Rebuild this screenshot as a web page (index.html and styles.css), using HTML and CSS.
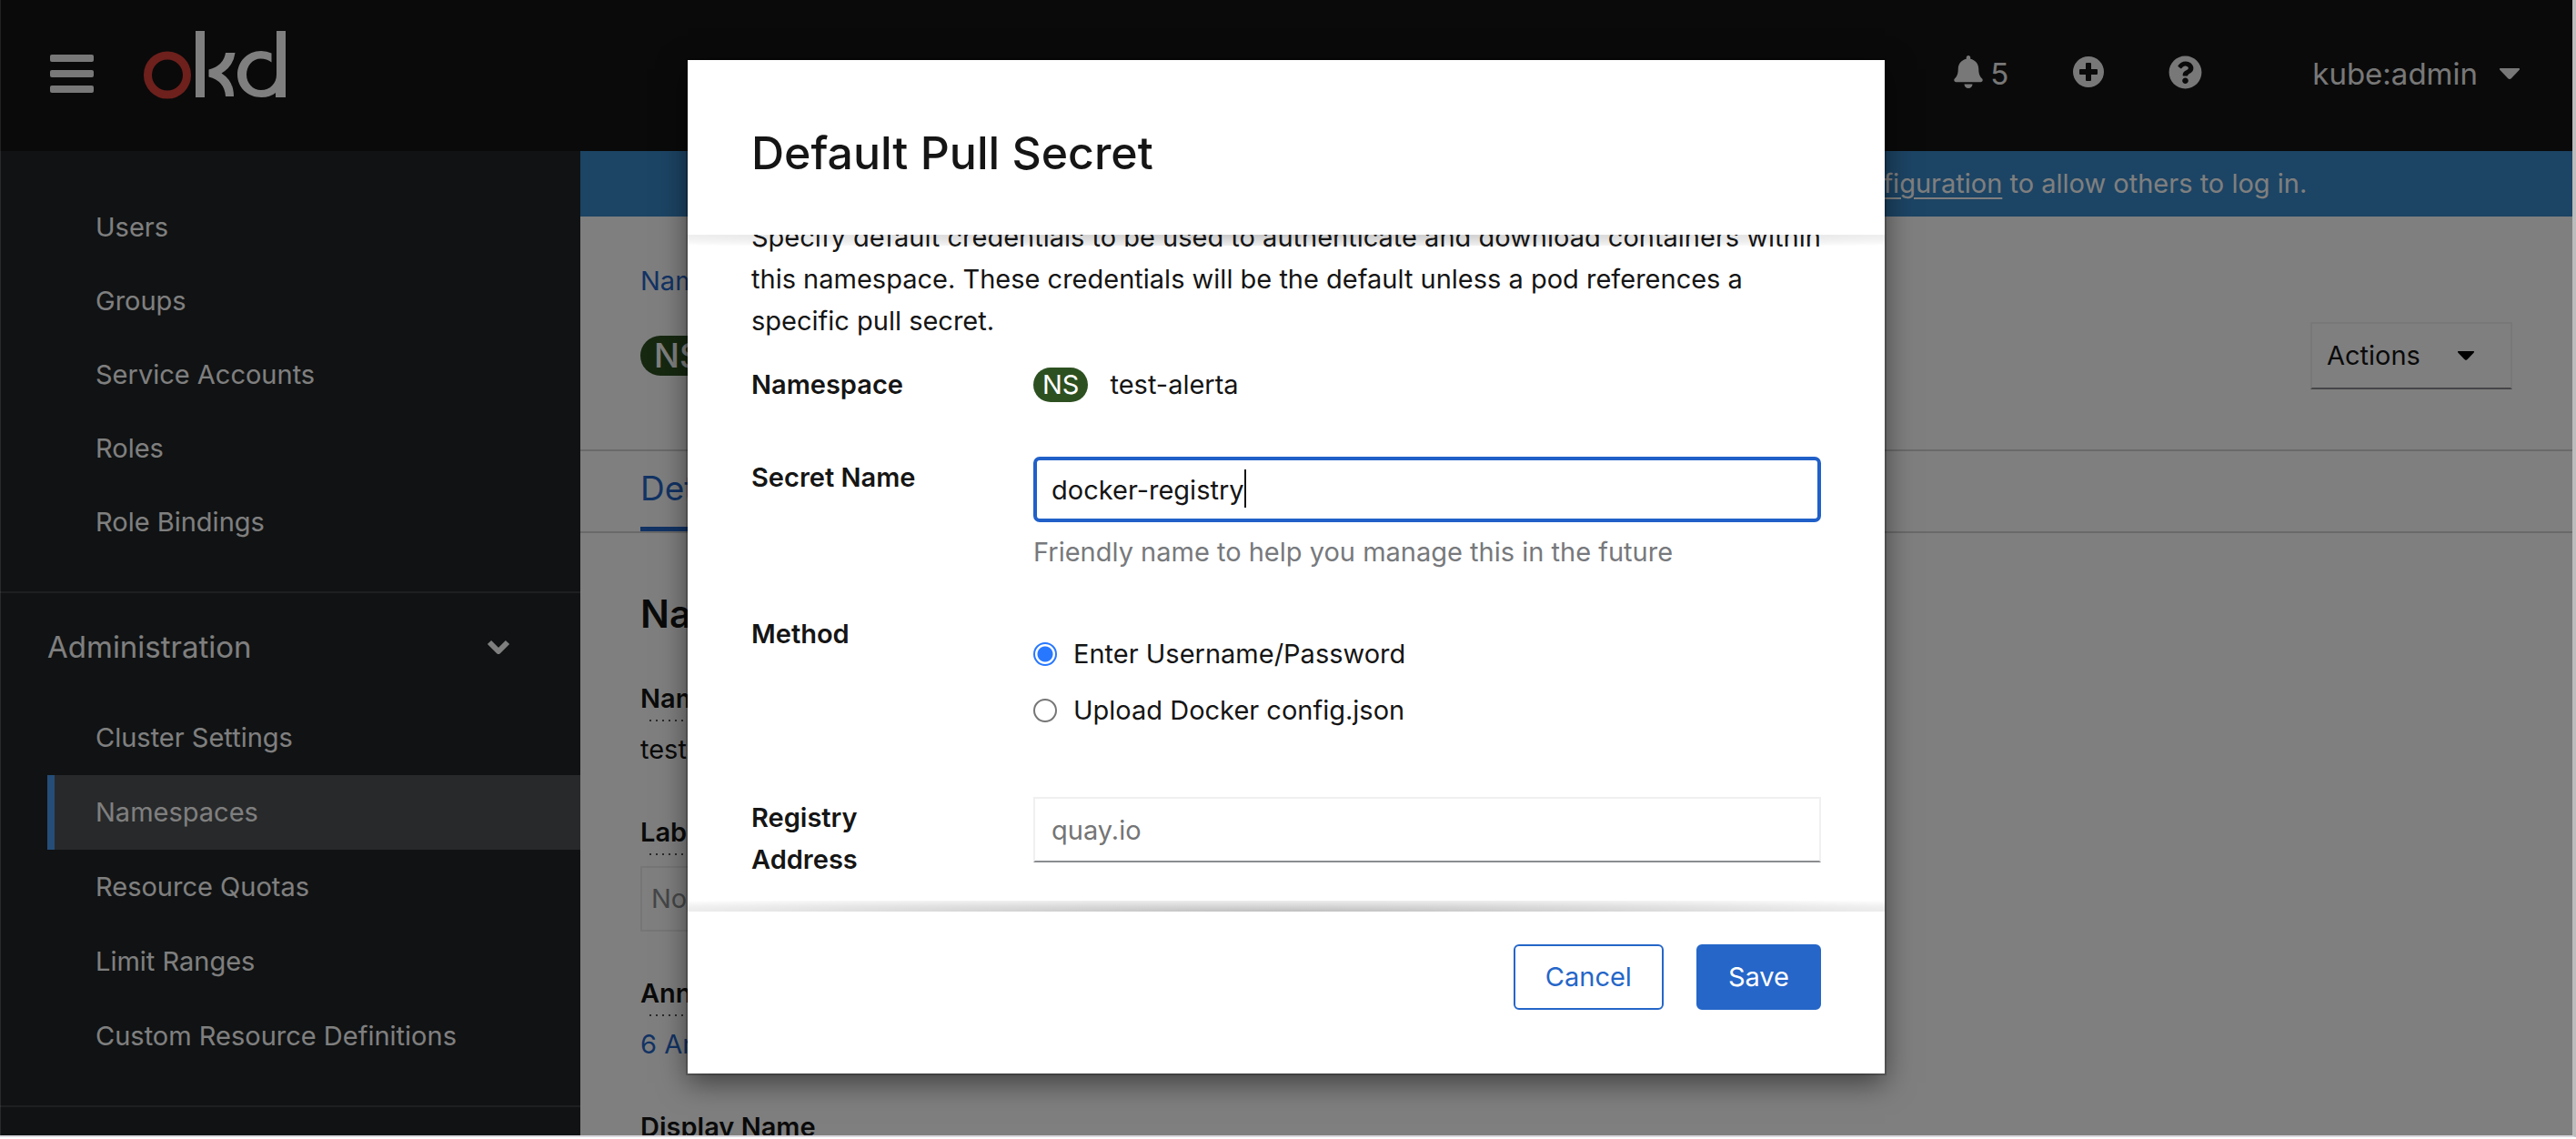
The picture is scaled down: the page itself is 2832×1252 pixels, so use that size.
FILE: index.html
```html
<!DOCTYPE html>
<html lang="en">
<head>
<meta charset="utf-8">
<title>Namespaces · Details · OKD</title>
<link rel="stylesheet" href="styles.css">
</head>
<body>
<div class="app">
  <header class="masthead">
    <button class="icon-button" aria-label="Toggle navigation">
      <svg class="hamburger" viewBox="0 0 48 42" width="48" height="42"><rect width="48" height="8" rx="2"/><rect y="17" width="48" height="8" rx="2"/><rect y="34" width="48" height="8" rx="2"/></svg>
    </button>
    <a class="brand" href="#" aria-label="okd">
      <svg viewBox="0 0 156 75" width="156" height="75">
        <circle cx="26" cy="48.500" r="21.500" fill="none" stroke="#dc4038" stroke-width="9"/>
        <path fill="#fff" d="M57 0h10v73H57zM90 24h10.500q-2 15-15 22.500Q99 55 99 72H90q-1-17-18.500-21.500v-8Q88 38 90 24zM146 0h10v73h-11v-5q-6 5-15.500 5C114 73 103 62 103 48s11-26 26-26q6.500 0 11.500 2.500v10q-5-4-12-4c-9 0-15.500 8-15.500 17.500S120 65 129 65c10 0 17-7.500 17-17z"/>
      </svg>
    </a>
    <div class="tools">
      <button class="icon-button alerts" aria-label="5 notifications">
        <svg viewBox="0 0 448 512" width="32" height="36"><path d="M224 512c35.320 0 63.970-28.650 63.970-64H160.030c0 35.350 28.650 64 63.970 64zm215.390-149.710c-19.320-20.760-55.470-51.990-55.470-154.290 0-77.700-54.480-139.900-127.940-155.160V32c0-17.670-14.320-32-31.980-32s-31.980 14.330-31.980 32v20.840C118.560 68.100 64.080 130.300 64.080 208c0 102.300-36.150 133.530-55.470 154.290-6 6.450-8.660 14.160-8.610 21.710.11 16.400 12.980 32 32.100 32h383.800c19.120 0 32-15.600 32.100-32 .05-7.550-2.610-15.270-8.610-21.710z"/></svg>
        <span>5</span>
      </button>
      <button class="icon-button import" aria-label="Import YAML">
        <svg viewBox="0 0 36 36" width="36" height="36"><path fill-rule="evenodd" d="M18 1a17 17 0 1 0 0 34a17 17 0 1 0 0-34zM15 9q0-1 1-1h4q1 0 1 1v6h6q1 0 1 1v4q0 1-1 1h-6v6q0 1-1 1h-4q-1 0-1-1v-6H9q-1 0-1-1v-4q0-1 1-1h6z"/></svg>
      </button>
      <button class="icon-button" aria-label="Help">
        <svg viewBox="0 0 512 512" width="37" height="37"><path d="M504 256c0 136.997-111.043 248-248 248S8 392.997 8 256C8 119.083 119.043 8 256 8s248 111.083 248 248zM262.655 90c-54.497 0-89.255 22.957-116.549 63.758-3.536 5.286-2.353 12.415 2.715 16.258l34.699 26.310c5.205 3.947 12.621 3.008 16.665-2.122 17.864-22.658 30.113-35.797 57.303-35.797 20.429 0 45.698 13.148 45.698 32.958 0 14.976-12.363 22.667-32.534 33.976C247.128 238.528 216 254.941 216 296v4c0 6.627 5.373 12 12 12h56c6.627 0 12-5.373 12-12v-1.333c0-28.462 83.186-29.647 83.186-106.667 0-58.002-60.165-102-116.531-102zM256 338c-25.365 0-46 20.635-46 46 0 25.364 20.635 46 46 46s46-20.636 46-46c0-25.365-20.635-46-46-46z"/></svg>
      </button>
      <button class="icon-button user">
        <span>kube:admin</span>
        <svg viewBox="0 0 22 12" width="22" height="12"><path d="M1 0h20q2 0 .5 2L13 11q-2 2-4 0L.5 2Q-1 0 1 0z"/></svg>
      </button>
    </div>
  </header>
  <div class="columns">
    <nav class="sidebar">
      <ul class="nav-list">
        <li><a href="#">Users</a></li>
        <li><a href="#">Groups</a></li>
        <li><a href="#">Service Accounts</a></li>
        <li><a href="#">Roles</a></li>
        <li><a href="#">Role Bindings</a></li>
      </ul>
      <section class="nav-section">
        <button class="nav-heading">Administration
          <svg viewBox="0 0 26 16" width="26" height="16"><path d="M3 3l10 10L23 3" fill="none" stroke="#fff" stroke-width="6" stroke-linejoin="round"/></svg>
        </button>
        <ul class="nav-list">
          <li><a href="#">Cluster Settings</a></li>
          <li><a class="current" href="#" aria-current="page">Namespaces</a></li>
          <li><a href="#">Resource Quotas</a></li>
          <li><a href="#">Limit Ranges</a></li>
          <li><a href="#">Custom Resource Definitions</a></li>
        </ul>
      </section>
    </nav>
    <main class="content">
      <p class="banner">You are logged in as a temporary administrative user. Update the <a href="#">cluster OAuth configuration</a> to allow others to log in.</p>
      <div class="page-head">
        <a class="crumb" href="#">Namespaces</a>
        <div class="title-row">
          <h1 class="page-title"><span class="badge badge-large">NS</span>test-alerta</h1>
          <button class="actions">Actions
            <svg viewBox="0 0 22 12" width="18" height="10"><path d="M1 0h20q2 0 .5 2L13 11q-2 2-4 0L.5 2Q-1 0 1 0z"/></svg>
          </button>
        </div>
      </div>
      <div class="tabs"><a class="tab" href="#">Details</a></div>
      <section class="details">
        <h2>Namespace Details</h2>
        <dl>
          <dt><span>Name</span></dt><dd>test-alerta</dd>
          <dt><span>Labels</span></dt><dd><span class="label-box">No labels</span></dd>
          <dt><span>Annotations</span></dt><dd><a href="#">6 Annotations</a></dd>
          <dt><span>Display Name</span></dt><dd>No display name</dd>
        </dl>
      </section>
    </main>
  </div>
  <div class="backdrop">
    <form class="modal" role="dialog" aria-labelledby="modal-title">
      <h1 class="modal-title" id="modal-title">Default Pull Secret</h1>
      <div class="modal-body" id="modal-body">
        <p>Specify default credentials to be used to authenticate and download containers within this namespace. These credentials will be the default unless a pod references a specific pull secret.</p>
        <div class="row">
          <span class="row-label">Namespace</span>
          <div class="row-field resource"><span class="badge">NS</span>test-alerta</div>
        </div>
        <div class="row row-name">
          <label class="row-label" for="secret-name">Secret Name</label>
          <div class="row-field">
            <input class="text-input" id="secret-name" type="text" value="docker-registry" aria-describedby="secret-help">
            <span class="caret"></span>
            <p class="help" id="secret-help">Friendly name to help you manage this in the future</p>
          </div>
        </div>
        <div class="row row-method">
          <span class="row-label" id="method">Method</span>
          <div class="row-field radios" role="radiogroup" aria-labelledby="method">
            <label class="radio"><input type="radio" name="method" checked>Enter Username/Password</label>
            <label class="radio"><input type="radio" name="method">Upload Docker config.json</label>
          </div>
        </div>
        <div class="row row-address">
          <label class="row-label" for="address">Registry Address</label>
          <div class="row-field"><input class="text-input" id="address" type="text" placeholder="quay.io"></div>
        </div>
      </div>
      <footer class="modal-footer">
        <button class="button" type="button">Cancel</button>
        <button class="button primary" type="submit">Save</button>
      </footer>
    </form>
  </div>
</div>
<script src="modal.js"></script>
</body>
</html>
```
FILE: styles.css
```css
* { box-sizing: border-box; }

:root {
  --text: #151515;
  --blue: #2566c8;
  --badge: #2d5021;
}

body {
  margin: 0;
  height: 100vh;
  display: flex;
  flex-direction: column;
  padding-bottom: 2px;
  background: #fff;
  color: var(--text);
  font: 29px/46px Inter, "Liberation Sans", sans-serif;
}

h1, h2, p, ul, dl, dd { margin: 0; padding: 0; font-weight: inherit; }
ul { list-style: none; }
button, input { font: inherit; color: inherit; }
button { border: 0; background: none; padding: 0; }
a { color: var(--blue); text-decoration: none; }
svg { display: block; flex: none; }

.app {
  position: relative;
  flex: 1;
  min-height: 0;
  overflow: hidden;
  display: flex;
  flex-direction: column;
  border-right: 4px solid #bcbcbc;
  border-bottom: 2px solid #dcd9e0;
}

/* Masthead */
.masthead {
  flex: none;
  height: 166px;
  display: flex;
  align-items: flex-start;
  padding: 34px 58px 0 55px;
  background: #151515;
  color: #f0f0f0;
  font-size: 33px;
}
.icon-button { display: flex; align-items: center; height: 94px; fill: currentColor; }
.masthead > .icon-button { margin-right: 55px; }
.tools { display: flex; margin-left: auto; }
.tools svg { margin-bottom: 4px; }
.tools .user svg { margin-bottom: 0; }
.alerts { gap: 8px; margin-right: 70px; }
.import { margin-right: 70px; }
.user { gap: 24px; margin-left: 121px; }

/* Sidebar */
.columns { flex: 1; display: flex; min-height: 0; }
.sidebar { width: 638px; flex: none; overflow: hidden; background: #212427; padding-top: 43px; }
.nav-list a {
  display: flex;
  align-items: center;
  height: 81px;
  margin-left: 52px;
  padding-left: 45px;
  border-left: 8px solid transparent;
  color: #fff;
}
.nav-section .nav-list a { height: 82px; }
.nav-list .current { background: #4f5255; border-color: #4b9bf0; }
.nav-section { margin-top: 36px; padding-bottom: 35px; border: solid #3c3f42; border-width: 2px 0; }
.nav-heading {
  display: flex;
  justify-content: space-between;
  align-items: center;
  width: 100%;
  height: 118px;
  padding: 0 77px 0 52px;
  color: #fff;
  font-size: 33px;
}

/* Page content */
.content { flex: 1; min-width: 0; overflow: hidden; background: #fff; }
.banner { height: 72px; line-height: 72px; text-align: center; background: #3888c8; color: #fff; white-space: nowrap; }
.banner a { color: inherit; text-decoration: underline; text-underline-offset: 5px; }
.page-head { height: 258px; padding: 48px 66px 0; border-bottom: 2px solid #d2d2d2; }
.crumb { display: block; }
.title-row { display: flex; justify-content: space-between; align-items: center; margin-top: 22px; }
.page-title { display: flex; align-items: center; gap: 24px; font-size: 42px; }
.actions {
  display: flex;
  justify-content: space-between;
  align-items: center;
  width: 222px;
  height: 74px;
  padding: 0 40px 0 16px;
  border: 2px solid #f0f0f0;
  border-bottom-color: #8a8d90;
}
.tabs { display: flex; height: 90px; padding: 0 66px; border-bottom: 2px solid #d2d2d2; }
.tab { padding: 18px 32px 0 0; font-size: 37px; border-bottom: 5px solid var(--blue); }
.details { padding: 64px 66px 0; }
.details h2 { font-size: 42px; line-height: 50px; font-weight: 600; }
.details dt { margin-top: 45px; font-weight: 600; }
.details dt span {
  display: inline-block;
  padding-bottom: 2px;
  background: repeating-linear-gradient(90deg, transparent 0 5px, #555 5px 7px) 5px 100% / 100% 2px no-repeat;
}
.details dd { padding-top: 8px; }
.label-box { display: inline-block; height: 72px; padding: 0 10px; line-height: 68px; border: 2px solid #ededed; color: #8a8d90; margin-top: 4px; }

.badge {
  height: 38px;
  line-height: 38px;
  padding: 0 10px;
  border-radius: 19px;
  background: var(--badge);
  color: #fff;
}
.badge-large { height: 44px; line-height: 44px; padding: 0 15px; border-radius: 22px; font-size: 37px; font-weight: 500; }

/* Modal */
.backdrop {
  position: absolute;
  inset: 0;
  display: flex;
  justify-content: center;
  padding: 66px 0 68px;
  background: rgba(0, 0, 0, .5);
  box-shadow: inset 1px 0 rgba(255, 255, 255, .1);
}
.modal {
  width: 1316px;
  max-width: 100%;
  display: flex;
  flex-direction: column;
  background: #fff;
  box-shadow: 0 0 0 2px rgba(0, 0, 0, .2), 0 10px 30px rgba(0, 0, 0, .5);
}
.modal-title { padding: 72px 70px 60px; font-size: 50px; line-height: 60px; font-weight: 500; }
.modal-body {
  flex: 1;
  min-height: 0;
  overflow-y: scroll;
  scrollbar-width: none;
  padding: 0 70px 60px;
  background:
    radial-gradient(ellipse at top, rgba(0, 0, 0, .22), transparent) top / 100% 12px no-repeat,
    radial-gradient(ellipse at bottom, rgba(0, 0, 0, .25), transparent) bottom / 100% 12px no-repeat;
}
.row { display: grid; grid-template-columns: 310px 1fr; margin-top: 24px; }
.row-label { max-width: 200px; font-weight: 600; }
.row-name { margin-top: 56px; }
.row-method { margin-top: 44px; }
.row-address { margin-top: 72px; }
.row-field { position: relative; }
.resource { display: flex; align-items: center; gap: 24px; }
.text-input {
  display: block;
  width: 100%;
  height: 72px;
  padding: 0 18px;
  border: 2px solid #f0f0f0;
  border-bottom-color: #8a8d90;
  background: #fff;
  outline: 0;
  caret-color: transparent;
}
.text-input:focus { padding: 0 16px; border: 4px solid #2060c8; border-radius: 7px; }
.text-input::placeholder { color: #757575; opacity: 1; }
.caret { display: none; position: absolute; left: 232px; top: 14px; width: 2px; height: 42px; background: var(--text); }
.text-input:focus + .caret { display: block; }
.help { padding-top: 10px; color: #77797c; }
.radios { display: flex; flex-direction: column; gap: 16px; padding-top: 22px; }
.radio { display: flex; align-items: center; gap: 18px; }
.radio input {
  appearance: none;
  width: 26px;
  height: 26px;
  margin: 0;
  border: 2px solid #767676;
  border-radius: 50%;
}
.radio input:checked { border-color: #2878ff; background: radial-gradient(circle, #2878ff 8px, transparent 9px); }

.modal-footer { display: flex; justify-content: flex-end; gap: 36px; padding: 36px 70px 70px; }
.button {
  height: 72px;
  padding: 0 33px;
  border: 2px solid var(--blue);
  border-radius: 6px;
  background: #fff;
  color: var(--blue);
}
.button.primary { background: var(--blue); color: #fff; }
```
FILE: modal.js
```js
const field = document.getElementById('secret-name');
field.focus();
field.setSelectionRange(field.value.length, field.value.length);
document.getElementById('modal-body').scrollTop = 20;
```
